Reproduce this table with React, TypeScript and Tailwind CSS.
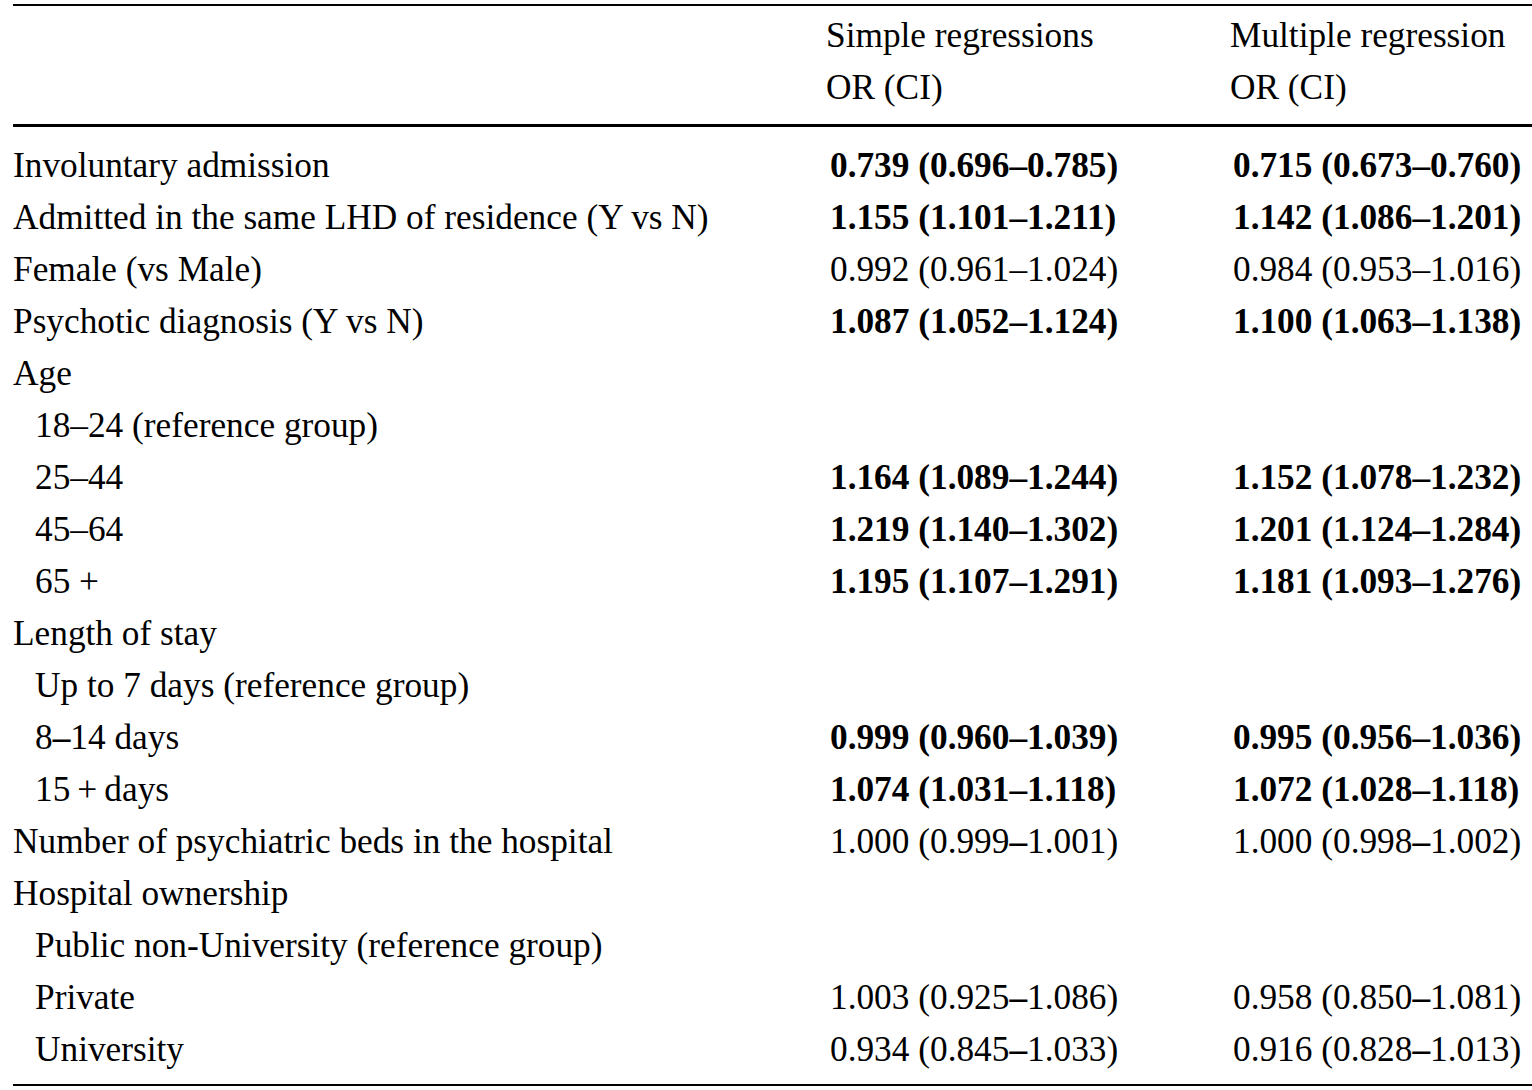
import * as React from "react";

type Row = {
  label: string;
  indent?: boolean;
  simple?: string;
  multiple?: string;
  bold?: boolean;
  heavyDash?: boolean;
};

const rows: Row[] = [
  { label: "Involuntary admission", simple: "0.739 (0.696–0.785)", multiple: "0.715 (0.673–0.760)", bold: true },
  { label: "Admitted in the same LHD of residence (Y vs N)", simple: "1.155 (1.101–1.211)", multiple: "1.142 (1.086–1.201)", bold: true },
  { label: "Female (vs Male)", simple: "0.992 (0.961–1.024)", multiple: "0.984 (0.953–1.016)" },
  { label: "Psychotic diagnosis (Y vs N)", simple: "1.087 (1.052–1.124)", multiple: "1.100 (1.063–1.138)", bold: true },
  { label: "Age" },
  { label: "18–24 (reference group)", indent: true },
  { label: "25–44", indent: true, simple: "1.164 (1.089–1.244)", multiple: "1.152 (1.078–1.232)", bold: true },
  { label: "45–64", indent: true, simple: "1.219 (1.140–1.302)", multiple: "1.201 (1.124–1.284)", bold: true },
  { label: "65 +", indent: true, simple: "1.195 (1.107–1.291)", multiple: "1.181 (1.093–1.276)", bold: true },
  { label: "Length of stay" },
  { label: "Up to 7 days (reference group)", indent: true },
  { label: "8–14 days", indent: true, simple: "0.999 (0.960–1.039)", multiple: "0.995 (0.956–1.036)", bold: true, heavyDash: true },
  { label: "15\u2009+\u2009days", indent: true, simple: "1.074 (1.031–1.118)", multiple: "1.072 (1.028–1.118)", bold: true, heavyDash: true },
  { label: "Number of psychiatric beds in the hospital", simple: "1.000 (0.999–1.001)", multiple: "1.000 (0.998–1.002)", heavyDash: true },
  { label: "Hospital ownership" },
  { label: "Public non-University (reference group)", indent: true },
  { label: "Private", indent: true, simple: "1.003 (0.925–1.086)", multiple: "0.958 (0.850–1.081)", heavyDash: true },
  { label: "University", indent: true, simple: "0.934 (0.845–1.033)", multiple: "0.916 (0.828–1.013)", heavyDash: true },
];

function Dashed(props: { text: string; heavy?: boolean }): React.ReactNode {
  const { text, heavy } = props;
  if (!heavy) return text;
  const parts = text.split("–");
  return (
    <>
      {parts.map((p, i) => (
        <React.Fragment key={i}>
          {i > 0 ? <span className="font-bold">–</span> : null}
          {p}
        </React.Fragment>
      ))}
    </>
  );
}

export default function App(): React.ReactNode {
  return (
    <div
      className="min-h-[1090px] bg-white pl-[13px] pt-1 text-black"
      style={{ fontFamily: '"Liberation Serif", "Times New Roman", serif' }}
    >
      <div className="border-t-2 border-b-[3px] border-black pt-[4px] pb-[10px] text-[35.3px] leading-[52px]">
        <div className="grid grid-cols-[813px_404px_1fr]">
          <div />
          <div>
            <div>Simple regressions</div>
            <div>OR (CI)</div>
          </div>
          <div>
            <div>Multiple regression</div>
            <div>OR (CI)</div>
          </div>
        </div>
      </div>

      <div className="border-b-2 border-black pt-[13px] pb-[8px] text-[35.3px] leading-[52px]">
        {rows.map((r, idx) => (
          <div key={idx} className="grid grid-cols-[813px_404px_1fr] whitespace-nowrap">
            <div className={r.indent ? "pl-[22px]" : ""}>
              {r.heavyDash && r.indent ? <Dashed text={r.label} heavy /> : r.label}
            </div>
            <div className={"pl-[4px] " + (r.bold ? "font-bold" : "")}>
              {r.simple ? <Dashed text={r.simple} heavy={r.heavyDash} /> : null}
            </div>
            <div className={"pl-[3px] " + (r.bold ? "font-bold" : "")}>
              {r.multiple ? <Dashed text={r.multiple} heavy={r.heavyDash} /> : null}
            </div>
          </div>
        ))}
      </div>
    </div>
  );
}
